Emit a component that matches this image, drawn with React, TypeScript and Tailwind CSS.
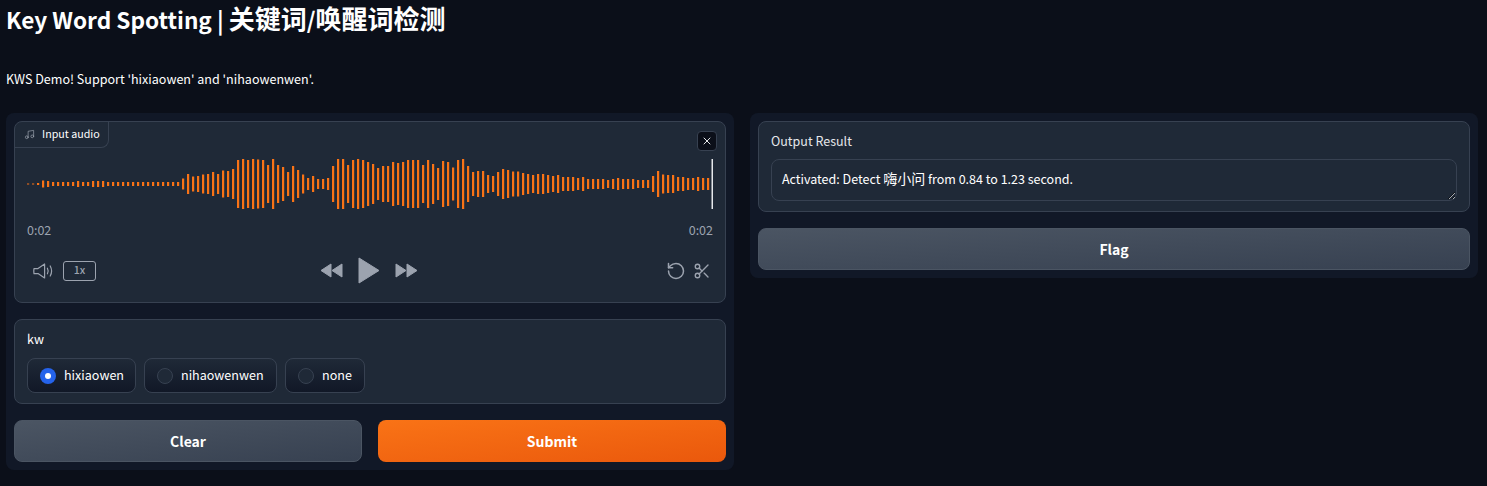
import React from 'react';
import { Music, RotateCcw, Scissors, X } from 'lucide-react';

const font = { fontFamily: '"Noto Sans CJK SC", "Noto Sans", sans-serif' };

// bar heights read off the waveform, one bar every 5px
const bars = [
  1, 1, 2, 7, 6, 4, 4, 4, 4, 4, 6, 4, 4, 6, 6, 6, 4, 4, 4, 4, 4, 4, 4, 4, 4, 4, 4, 4, 4, 4, 4,
  11, 20, 15, 16, 19, 20, 24, 20, 27, 26, 30, 48, 50, 48, 50, 49, 48, 38, 50, 38, 34, 24, 36, 28, 19, 12, 16, 10, 10, 12,
  36, 50, 50, 38, 48, 50, 48, 44, 40, 32, 36, 36, 44, 42, 44, 48, 48, 48, 38, 48, 40, 32, 46, 44, 33, 48, 50, 36,
  24, 26, 26, 18, 16, 24, 30, 28, 25, 25, 22, 20, 18, 20, 20, 18, 16, 18, 14, 14, 14, 12, 14, 10, 10, 10, 10, 8, 10, 12, 10, 10, 10, 8, 8, 8,
  16, 26, 19, 18, 18, 14, 14, 12, 12, 14, 12, 12,
];

function Waveform() {
  return (
    <svg width="686" height="50" viewBox="0 0 686 50" className="block">
      {bars.map((h, i) => (
        <rect key={i} x={i * 5} y={25 - h / 2} width="2.2" height={h} fill="#f97316" />
      ))}
      <rect x="684.5" y="0" width="2" height="50" fill="#e5e7eb" />
    </svg>
  );
}

function VolumeIcon() {
  return (
    <svg width="21" height="16" viewBox="0 0 21 16" fill="none" stroke="#9ca3af" strokeWidth="1.2" strokeLinejoin="round" strokeLinecap="round">
      <path d="M1 5.6 L5 5.6 L11.6 1 L11.6 15 L5 10.6 L1 10.6 Q0.6 8 1 5.6 Z" />
      <path d="M14.4 5.2 Q16 8 14.4 10.8" />
      <path d="M17.2 3 Q20 8 17.2 13" />
    </svg>
  );
}

function Rewind() {
  return (
    <svg width="23" height="15" viewBox="0 0 23 15" fill="#9ca3af" stroke="#9ca3af" strokeWidth="1" strokeLinejoin="round">
      <path d="M1 7.5 L11 1 L11 14 Z" />
      <path d="M12 7.5 L22 1 L22 14 Z" />
    </svg>
  );
}

function Forward() {
  return (
    <svg width="23" height="15" viewBox="0 0 23 15" fill="#9ca3af" stroke="#9ca3af" strokeWidth="1" strokeLinejoin="round">
      <path d="M1 1 L11 7.5 L1 14 Z" />
      <path d="M12 1 L22 7.5 L12 14 Z" />
    </svg>
  );
}

function Play() {
  return (
    <svg width="22" height="27" viewBox="0 0 22 27" fill="#9ca3af" stroke="#9ca3af" strokeWidth="1" strokeLinejoin="round">
      <path d="M1 1 L21 13.5 L1 26 Z" />
    </svg>
  );
}

function Radio({ label, checked, className }: { label: string; checked?: boolean; className: string }) {
  return (
    <label className={`flex h-[35px] items-center rounded-lg border border-[#374151] bg-linear-to-b from-[#1f2937] to-[#111827] pl-[12px] text-[12.55px] leading-none text-white ${className}`}>
      {checked ? (
        <span className="flex h-4 w-4 items-center justify-center rounded-full bg-[#2563eb]">
          <span className="h-[6px] w-[6px] rounded-full bg-white" />
        </span>
      ) : (
        <span className="h-4 w-4 rounded-full border border-[#374151] bg-[#1f2937]" />
      )}
      <span className="ml-2">{label}</span>
    </label>
  );
}

export default function App() {
  return (
    <div style={font} className="h-[486px] overflow-hidden bg-[#0b0f19] px-[6px] text-white">
      <h1 className="h-[40px] text-[22.6px] leading-[36px] font-semibold text-white">
        Key Word Spotting | <span className="text-[26px]">关键词</span>/<span className="text-[26px]">唤醒词检测</span>
      </h1>
      <p className="mt-[29px] h-[20px] text-[12.55px] leading-[20px]">KWS Demo! Support 'hixiaowen' and 'nihaowenwen'.</p>
      <div className="mt-[24px] flex items-start gap-4">
        {/* left column */}
        <div className="flex h-[357px] w-[728px] flex-col gap-4 rounded-lg bg-[#111827] p-2">
          <div className="relative h-[182px] rounded-lg border border-[#374151] bg-[#1f2937]">
            <div className="flex h-[26px] w-[94px] items-center rounded-br-lg border-r border-b border-[#374151] pl-[9px] text-[10.7px] leading-none">
              <Music size={11} strokeWidth={1.5} color="#9ca3af" />
              <span className="ml-[7px]">Input audio</span>
            </div>
            <button className="absolute top-[9px] right-[8px] flex h-[20px] w-[20px] items-center justify-center rounded border border-[#374151] bg-[#0b0f19]">
              <X size={12} strokeWidth={2} color="#e5e7eb" />
            </button>
            <div className="mt-[11px] pl-[12px]">
              <Waveform />
            </div>
            <div className="mt-[12px] flex justify-between px-[12px] text-[12.5px] leading-[18px] text-[#9ca3af]">
              <span>0:02</span>
              <span>0:02</span>
            </div>
            <div className="mt-[18px] flex items-center justify-between pr-[14px] pl-[18px]">
              <div className="flex w-[200px] items-center gap-[9px]">
                <VolumeIcon />
                <span className="flex h-[20px] w-[33px] items-center justify-center rounded-[3px] border border-[#9ca3af] text-[10.5px] leading-none font-medium text-[#9ca3af]">1x</span>
              </div>
              <div className="mr-[6px] flex items-center gap-[15px]">
                <Rewind />
                <Play />
                <Forward />
              </div>
              <div className="flex w-[200px] items-center justify-end gap-[7px]">
                <RotateCcw size={20} strokeWidth={1.8} color="#9ca3af" />
                <Scissors size={18} strokeWidth={1.8} color="#9ca3af" />
              </div>
            </div>
          </div>
          <div className="h-[85px] rounded-lg border border-[#374151] bg-[#1f2937] px-[12px] pt-[9px]">
            <div className="h-[20px] text-[12.5px] leading-[20px]">kw</div>
            <div className="mt-[9px] flex gap-2">
              <Radio label="hixiaowen" checked className="w-[109px]" />
              <Radio label="nihaowenwen" className="w-[133px]" />
              <Radio label="none" className="w-[80px]" />
            </div>
          </div>
          <div className="flex gap-4">
            <button className="h-[42px] w-[348px] rounded-lg border border-[#4b5563] bg-linear-to-br from-[#4b5563] to-[#374151] text-[14px] font-semibold text-white">Clear</button>
            <button className="h-[42px] w-[348px] rounded-lg bg-linear-to-br from-[#f97316] to-[#ea580c] text-[14px] font-semibold text-white">Submit</button>
          </div>
        </div>
        {/* right column */}
        <div className="flex h-[165px] w-[728px] flex-col gap-4 rounded-lg bg-[#111827] p-2">
          <div className="h-[91px] rounded-lg border border-[#374151] bg-[#1f2937] px-[12px] pt-[9px]">
            <div className="h-[20px] text-[12.5px] leading-[20px] text-[#e5e7eb]">Output Result</div>
            <div className="mt-[8px] h-[42px] resize-y overflow-auto rounded-lg border border-[#374151] bg-[#1f2937] px-[10px] pt-[8px] text-[12.5px] leading-[20px] text-white">
              Activated: Detect <span className="text-[14px]">嗨小问</span> from 0.84 to 1.23 second.
            </div>
          </div>
          <button className="h-[42px] rounded-lg border border-[#4b5563] bg-linear-to-br from-[#4b5563] to-[#374151] text-[14px] font-semibold text-white">Flag</button>
        </div>
      </div>
    </div>
  );
}
